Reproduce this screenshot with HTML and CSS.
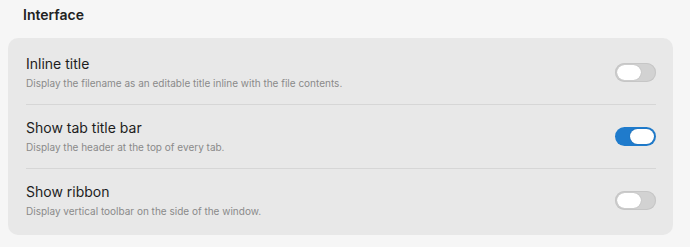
FILE: index.html
```html
<!DOCTYPE html>
<html>
<head>
<meta charset="utf-8">
<link rel="stylesheet" href="styles.css">
</head>
<body>
<div class="page">
  <h2 class="heading">Interface</h2>
  <div class="card">
    <div class="row">
      <div class="info">
        <div class="name">Inline title</div>
        <div class="desc">Display the filename as an editable title inline with the file contents.</div>
      </div>
      <div class="toggle"><div class="knob"></div></div>
    </div>
    <div class="row">
      <div class="info">
        <div class="name">Show tab title bar</div>
        <div class="desc">Display the header at the top of every tab.</div>
      </div>
      <div class="toggle on"><div class="knob"></div></div>
    </div>
    <div class="row">
      <div class="info">
        <div class="name">Show ribbon</div>
        <div class="desc">Display vertical toolbar on the side of the window.</div>
      </div>
      <div class="toggle"><div class="knob"></div></div>
    </div>
  </div>
</div>
</body>
</html>
```
FILE: styles.css
```css
html, body {
  margin: 0;
  padding: 0;
  background: #f6f6f6;
  font-family: Inter, "Noto Sans", sans-serif;
  color: #222;
}
.page {
  padding: 6px 17px 0 8px;
}
.heading {
  margin: 0 0 14px 15px;
  font-size: 14px;
  font-weight: 600;
  line-height: 18px;
  color: #222;
}
.card {
  background: #e8e8e8;
  border-radius: 10px;
  padding: 3px 17px 3px 18px;
}
.row {
  display: flex;
  align-items: center;
  justify-content: space-between;
  border-top: 1px solid #d6d6d6;
  height: 63px;
}
.row:first-child {
  border-top: none;
}
.name {
  font-size: 14px;
  line-height: 18px;
  color: #1d1d1d;
}
.desc {
  font-size: 10px;
  line-height: 14px;
  margin-top: 3px;
  color: #8a8a8a;
}
.toggle {
  width: 41px;
  height: 19px;
  border-radius: 10px;
  background: #d2d2d2;
  box-sizing: border-box;
  padding: 2px;
  display: flex;
  justify-content: flex-start;
  box-shadow: inset 0 0 0 1px #c6c6c6;
}
.toggle.on {
  background: #1f7bcc;
  justify-content: flex-end;
  box-shadow: none;
}
.knob {
  width: 24px;
  height: 15px;
  border-radius: 8px;
  background: #fff;
  box-shadow: 0 0 1px rgba(0,0,0,0.3);
}
```
